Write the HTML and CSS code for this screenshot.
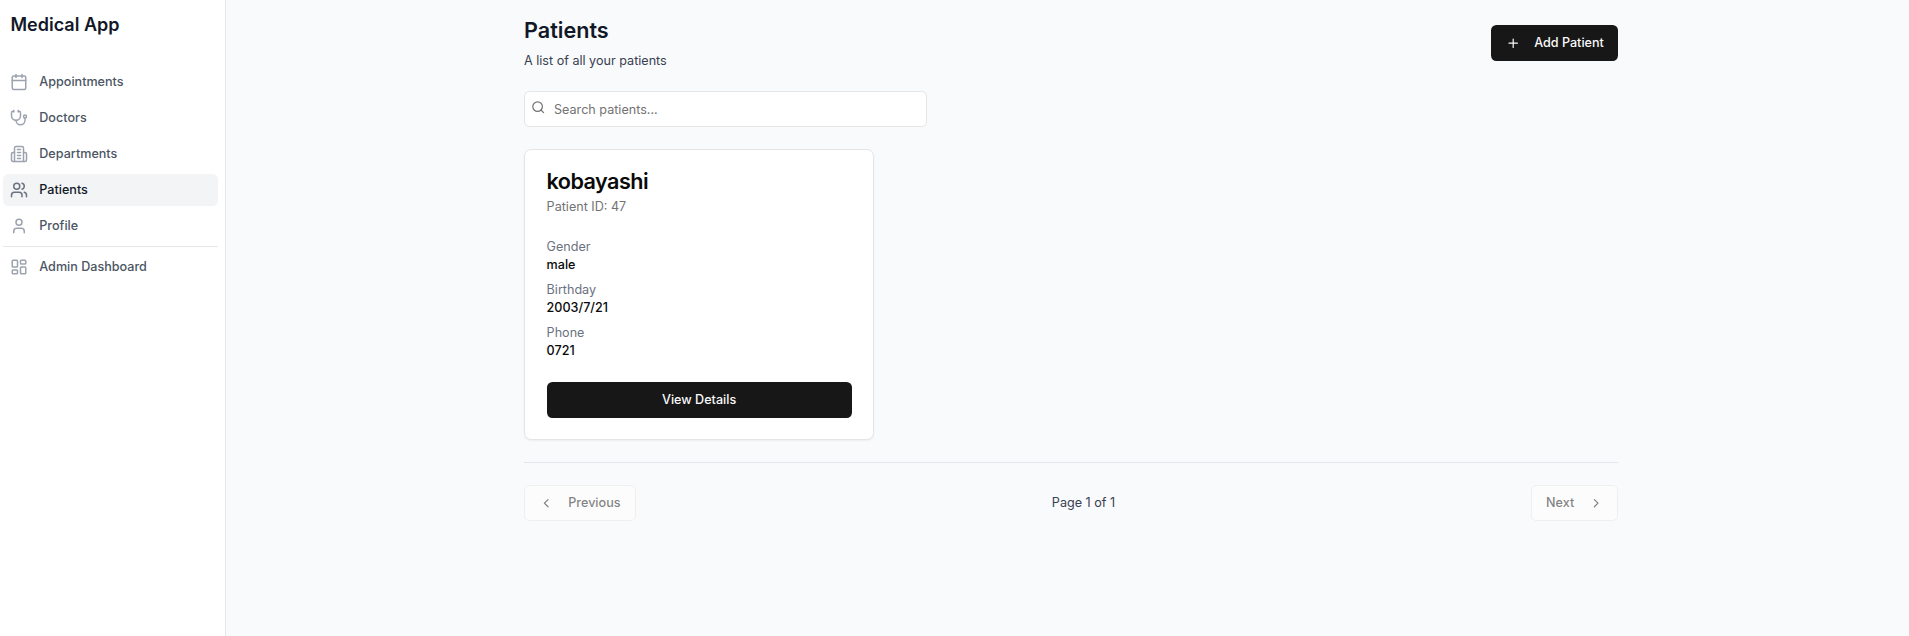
FILE: index.html
```
<!DOCTYPE html>
<html lang="en">
<head>
<meta charset="utf-8">
<title>Medical App</title>
<link rel="stylesheet" href="styles.css">
</head>
<body>
<div class="app">
  <aside class="sidebar">
    <div class="brand">Medical App</div>
    <nav class="nav">
      <a class="nav-item"><svg class="icon" viewBox="0 0 24 24"><path d="M8 2v4M16 2v4"/><rect width="18" height="18" x="3" y="4" rx="2"/><path d="M3 10h18"/></svg>Appointments</a>
      <a class="nav-item"><svg class="icon" viewBox="0 0 24 24"><path d="M11 2v2M5 2v2"/><path d="M5 3H4a2 2 0 0 0-2 2v4a6 6 0 0 0 12 0V5a2 2 0 0 0-2-2h-1"/><path d="M8 15a6 6 0 0 0 12 0v-3"/><circle cx="20" cy="10" r="2"/></svg>Doctors</a>
      <a class="nav-item"><svg class="icon" viewBox="0 0 24 24"><path d="M6 22V4a2 2 0 0 1 2-2h8a2 2 0 0 1 2 2v18Z"/><path d="M6 10H4a2 2 0 0 0-2 2v8a2 2 0 0 0 2 2h2"/><path d="M18 10h2a2 2 0 0 1 2 2v8a2 2 0 0 1-2 2h-2"/><path d="M10 6h4M10 10h4M10 14h4M10 18h4"/></svg>Departments</a>
      <a class="nav-item active"><svg class="icon" viewBox="0 0 24 24"><path d="M16 21v-2a4 4 0 0 0-4-4H6a4 4 0 0 0-4 4v2"/><circle cx="9" cy="7" r="4"/><path d="M22 21v-2a4 4 0 0 0-3-3.87"/><path d="M16 3.13a4 4 0 0 1 0 7.75"/></svg>Patients</a>
      <a class="nav-item"><svg class="icon" viewBox="0 0 24 24"><path d="M19 21v-2a4 4 0 0 0-4-4H9a4 4 0 0 0-4 4v2"/><circle cx="12" cy="7" r="4"/></svg>Profile</a>
    </nav>
    <div class="nav nav-admin">
      <a class="nav-item"><svg class="icon" viewBox="0 0 24 24"><rect width="7" height="9" x="3" y="3" rx="1"/><rect width="7" height="5" x="14" y="3" rx="1"/><rect width="7" height="9" x="14" y="12" rx="1"/><rect width="7" height="5" x="3" y="16" rx="1"/></svg>Admin Dashboard</a>
    </div>
  </aside>
  <main class="main">
    <div class="container">
      <header class="page-header">
        <div>
          <h1 class="title">Patients</h1>
          <p class="subtitle">A list of all your patients</p>
        </div>
        <button class="btn btn-primary add"><svg class="icon-sm" viewBox="0 0 24 24"><path d="M5 12h14M12 5v14"/></svg>Add Patient</button>
      </header>
      <label class="search">
        <svg class="search-icon" viewBox="0 0 24 24"><circle cx="11" cy="11" r="8"/><path d="m21 21-4.3-4.3"/></svg>
        <input class="search-input" type="text" placeholder="Search patients...">
      </label>
      <section class="grid">
        <article class="card">
          <h2 class="card-title">kobayashi</h2>
          <p class="card-sub">Patient ID: 47</p>
          <dl class="details">
            <div><dt>Gender</dt><dd>male</dd></div>
            <div><dt>Birthday</dt><dd>2003/7/21</dd></div>
            <div><dt>Phone</dt><dd>0721</dd></div>
          </dl>
          <button class="btn btn-primary view">View Details</button>
        </article>
      </section>
      <footer class="pager">
        <button class="btn btn-outline prev" disabled><svg class="icon-sm" viewBox="0 0 24 24"><path d="m15 18-6-6 6-6"/></svg>Previous</button>
        <span class="page-count">Page 1 of 1</span>
        <button class="btn btn-outline next" disabled>Next<svg class="icon-sm" viewBox="0 0 24 24"><path d="m9 18 6-6-6-6"/></svg></button>
      </footer>
    </div>
  </main>
</div>
</body>
</html>
```

FILE: styles.css
```
* { box-sizing: border-box; margin: 0; padding: 0; }
body {
  font-family: Inter, "Liberation Sans", sans-serif;
  font-size: 12.6px;
  line-height: 18px;
  color: #0a0a0a;
  background: #f9fafb;
}
svg {
  fill: none;
  stroke: currentColor;
  stroke-width: 2;
  stroke-linecap: round;
  stroke-linejoin: round;
  flex-shrink: 0;
}
.app { display: flex; height: 636px; overflow: hidden; }

.sidebar {
  width: 226px;
  flex-shrink: 0;
  background: #fff;
  border-right: 1px solid #e5e7eb;
  padding: 12px 7px 0 3px;
}
.brand {
  padding-left: 7.5px;
  font-size: 18px;
  font-weight: 600;
  line-height: 25px;
  color: #111827;
}
.nav { display: flex; flex-direction: column; gap: 4px; padding-top: 29px; }
.nav-item {
  display: flex;
  align-items: center;
  gap: 11.1px;
  height: 32px;
  padding: 0 7.2px;
  border-radius: 5.4px;
  font-weight: 500;
  color: #4b5563;
}
.nav-item.active { background: #f3f4f6; color: #111827; }
.icon { width: 18px; height: 18px; color: #9ca3af; }
.active .icon { color: #6b7280; }
.nav-admin { margin-top: 4px; border-top: 1px solid #e5e7eb; padding-top: 4px; }

.main { flex: 1; }
.container { width: 1094px; margin-left: 298px; }
.page-header {
  display: flex;
  justify-content: space-between;
  align-items: flex-start;
  height: 91px;
  padding-top: 16px;
}
.title { font-size: 21.6px; line-height: 29px; font-weight: 600; color: #111827; }
.subtitle { margin-top: 7px; color: #374151; }

.btn {
  display: inline-flex;
  align-items: center;
  justify-content: center;
  height: 36px;
  border: 0;
  border-radius: 5.4px;
  font: 500 12.6px/18px Inter, "Liberation Sans", sans-serif;
}
.btn-primary { background: #171717; color: #fafafa; }
.icon-sm { width: 14.4px; height: 14.4px; }
.add { width: 127px; margin-top: 9px; padding-left: 1px; gap: 13.6px; }

.search { position: relative; display: block; width: 403px; }
.search-icon {
  position: absolute;
  left: 7px;
  top: 9px;
  width: 14.4px;
  height: 14.4px;
  color: #737373;
}
.search-input {
  display: block;
  width: 100%;
  height: 36px;
  padding: 0 10.8px 0 29px;
  border: 1px solid #e5e5e5;
  border-radius: 5.4px;
  background: #fff;
  font: 400 12.6px/18px Inter, "Liberation Sans", sans-serif;
}
.search-input::placeholder { color: #737373; }

.grid {
  display: grid;
  grid-template-columns: repeat(3, 1fr);
  gap: 21.6px;
  margin-top: 22px;
}
.card {
  height: 291px;
  padding: 20px 21.6px 0;
  background: #fff;
  border: 1px solid #e5e5e5;
  border-radius: 7.2px;
  box-shadow: 0 1px 2px rgba(0, 0, 0, .05);
}
.card-title {
  font-size: 21.6px;
  line-height: 22px;
  font-weight: 600;
  letter-spacing: -.54px;
}
.card-sub { margin-top: 6px; color: #737373; }
.details { display: flex; flex-direction: column; gap: 7px; margin-top: 22px; }
.details dt { color: #6b7280; }
.details dd { font-weight: 500; }
.view { width: 100%; margin-top: 22px; }

.pager {
  display: flex;
  justify-content: space-between;
  align-items: center;
  margin-top: 22px;
  padding-top: 22px;
  border-top: 1px solid #e5e7eb;
}
.page-count { color: #374151; }
.btn-outline { background: #fff; color: #0a0a0a; border: 1px solid #e5e5e5; opacity: .5; }
.prev { width: 112px; gap: 14.4px; }
.next { width: 87px; gap: 14.4px; }
```
